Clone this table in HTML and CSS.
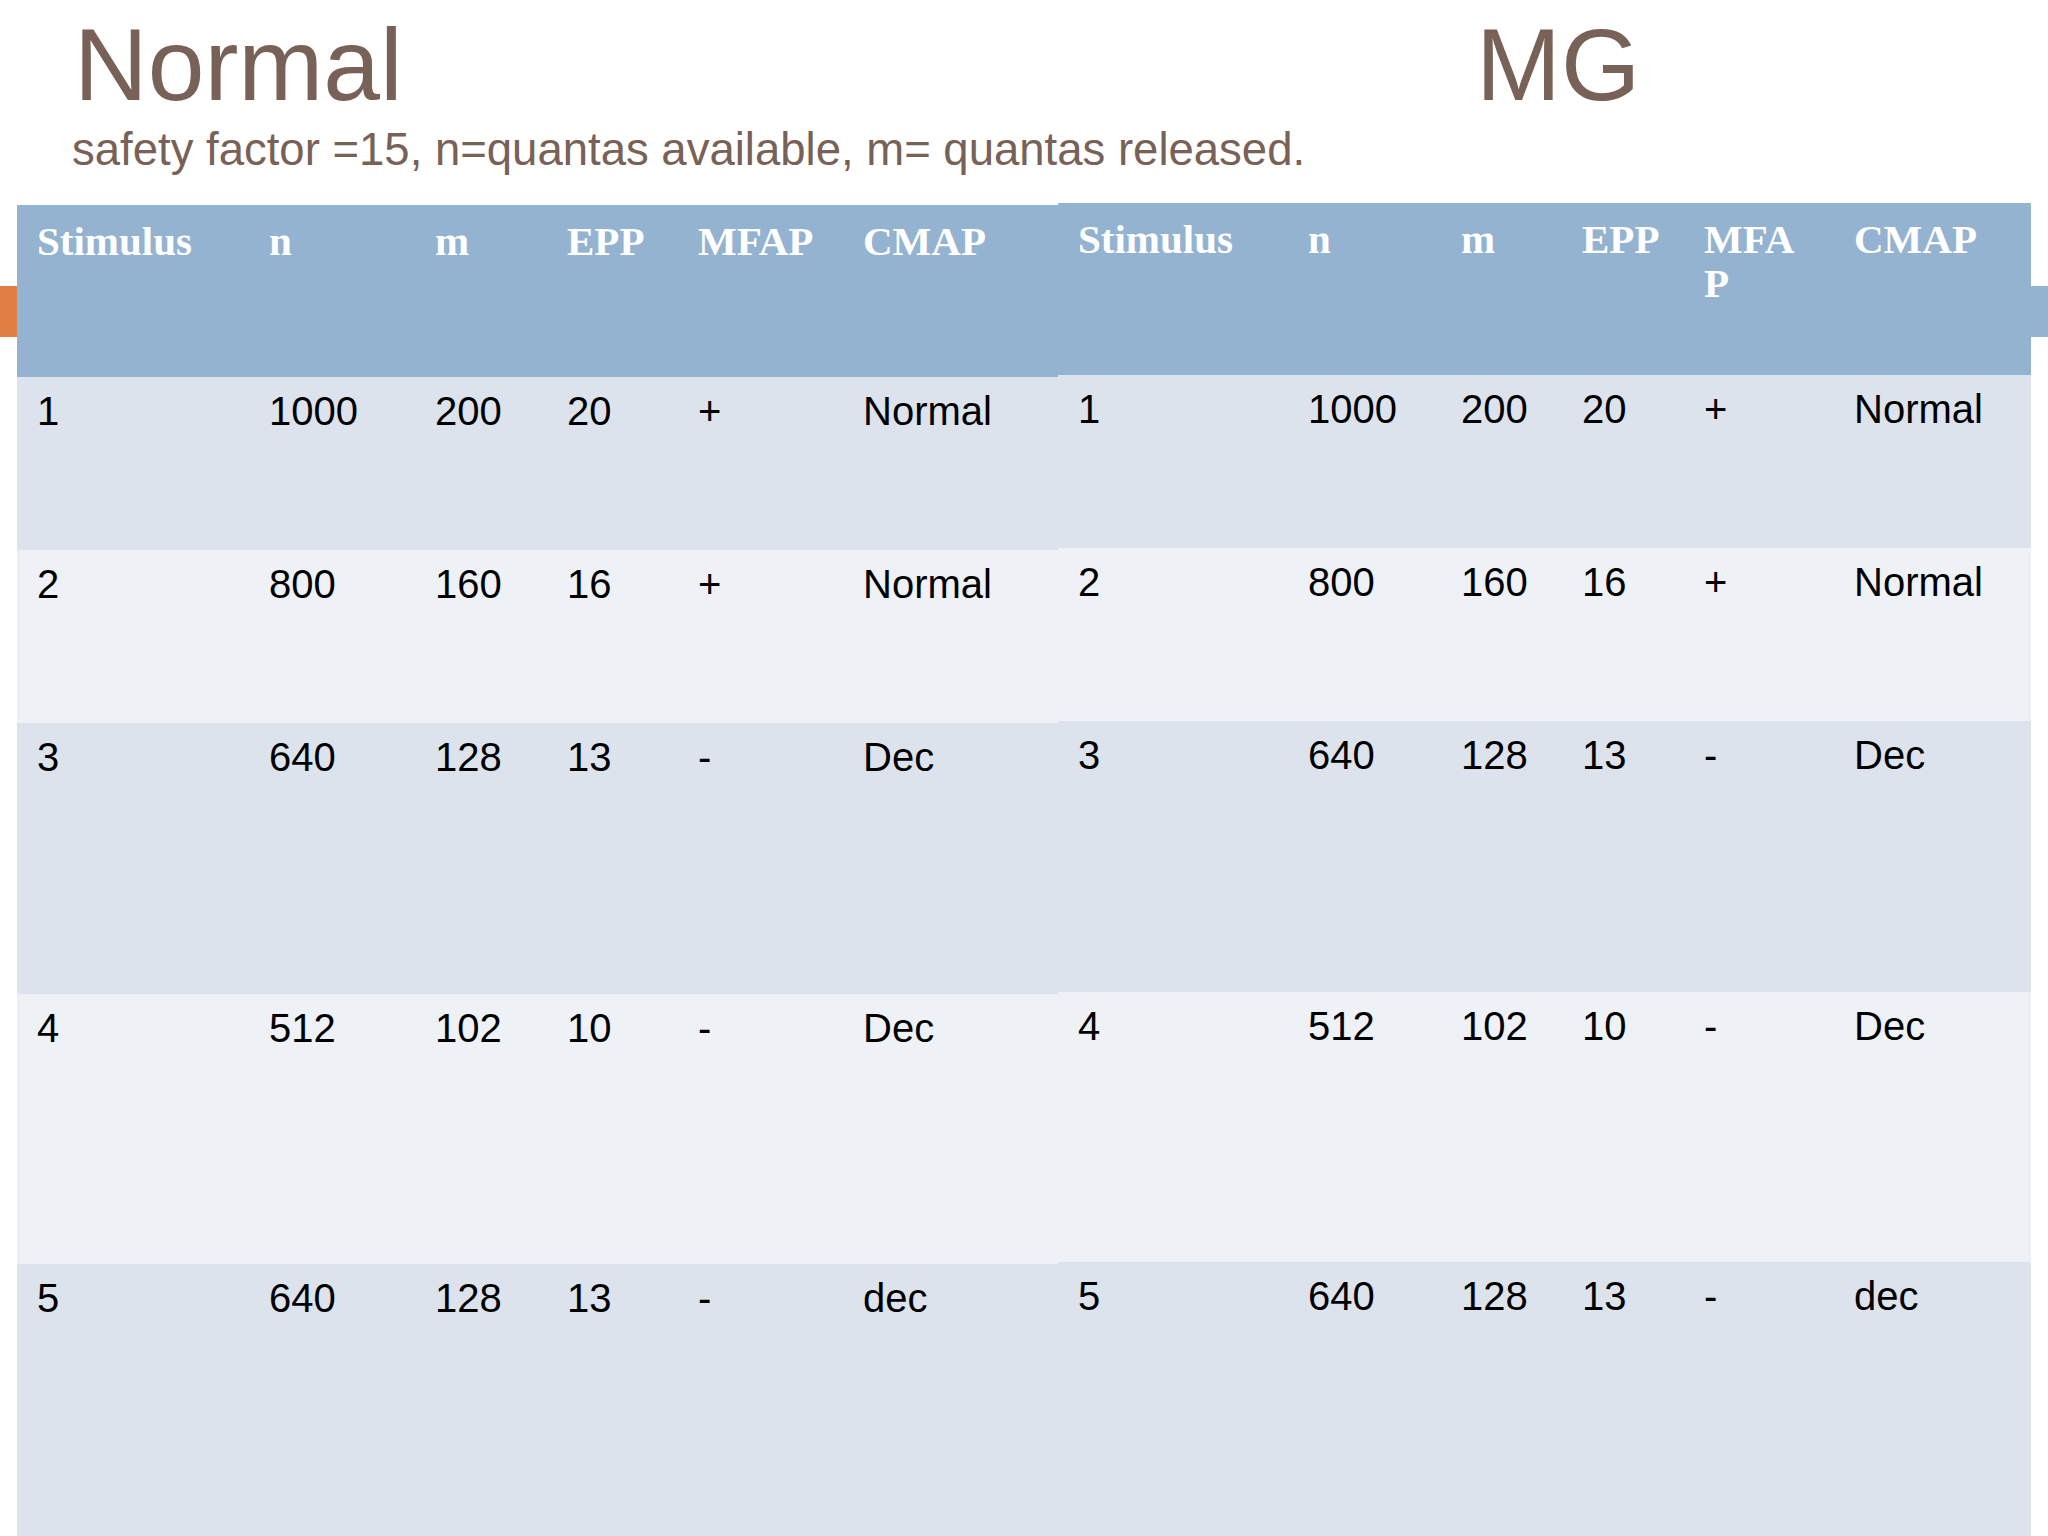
FILE: index.html
```html
<!DOCTYPE html>
<html lang="en">
<head>
<meta charset="utf-8">
<title>Normal vs MG</title>
<link rel="stylesheet" href="styles.css">
</head>
<body>
<div class="slide">
  <div class="bar bar-left"></div>
  <div class="bar bar-right"></div>
  <div class="titles">
    <h1 class="title title-normal">Normal</h1>
    <h1 class="title title-mg">MG</h1>
  </div>
  <p class="subtitle">safety factor =15, n=quantas available, m= quantas released.</p>
  <div class="tables">
    <table class="grid grid-left">
      <colgroup>
        <col class="l1"><col class="l2"><col class="l3"><col class="l4"><col class="l5"><col class="l6">
      </colgroup>
      <thead>
        <tr class="head"><th>Stimulus</th><th>n</th><th>m</th><th>EPP</th><th>MFAP</th><th>CMAP</th></tr>
      </thead>
      <tbody>
        <tr class="r1 odd"><td>1</td><td>1000</td><td>200</td><td>20</td><td>+</td><td>Normal</td></tr>
        <tr class="r2 even"><td>2</td><td>800</td><td>160</td><td>16</td><td>+</td><td>Normal</td></tr>
        <tr class="r3 odd"><td>3</td><td>640</td><td>128</td><td>13</td><td>-</td><td>Dec</td></tr>
        <tr class="r4 even"><td>4</td><td>512</td><td>102</td><td>10</td><td>-</td><td>Dec</td></tr>
        <tr class="r5 odd"><td>5</td><td>640</td><td>128</td><td>13</td><td>-</td><td>dec</td></tr>
      </tbody>
    </table>
    <table class="grid grid-right">
      <colgroup>
        <col class="g1"><col class="g2"><col class="g3"><col class="g4"><col class="g5"><col class="g6">
      </colgroup>
      <thead>
        <tr class="head"><th>Stimulus</th><th>n</th><th>m</th><th>EPP</th><th>MFA<br>P</th><th>CMAP</th></tr>
      </thead>
      <tbody>
        <tr class="r1 odd"><td>1</td><td>1000</td><td>200</td><td>20</td><td>+</td><td>Normal</td></tr>
        <tr class="r2 even"><td>2</td><td>800</td><td>160</td><td>16</td><td>+</td><td>Normal</td></tr>
        <tr class="r3 odd"><td>3</td><td>640</td><td>128</td><td>13</td><td>-</td><td>Dec</td></tr>
        <tr class="r4 even"><td>4</td><td>512</td><td>102</td><td>10</td><td>-</td><td>Dec</td></tr>
        <tr class="r5 odd"><td>5</td><td>640</td><td>128</td><td>13</td><td>-</td><td>dec</td></tr>
      </tbody>
    </table>
  </div>
</div>
</body>
</html>
```
FILE: styles.css
```css
html, body {
  margin: 0;
  padding: 0;
  background: #ffffff;
}

.slide {
  position: relative;
  width: 2048px;
  height: 1536px;
  overflow: hidden;
  background: #ffffff;
  font-family: "Liberation Sans", Arial, sans-serif;
}

.bar {
  position: absolute;
  top: 286px;
  height: 51px;
  width: 17px;
}
.bar-left {
  left: 0;
  background: #e07e44;
}
.bar-right {
  right: 0;
  background: #94b3d0;
}

.titles {
  display: flex;
  padding-top: 14px;
  padding-left: 74px;
}

.title {
  margin: 0;
  font-family: "Liberation Sans", Arial, sans-serif;
  font-weight: normal;
  font-size: 102px;
  line-height: 102px;
  color: #786156;
}

.title-normal {
  width: 1402px;
}

.subtitle {
  margin: 11px 0 0 72px;
  font-size: 45.5px;
  line-height: 45px;
  color: #786156;
}

.tables {
  display: flex;
  align-items: flex-start;
  margin-top: 33px;
  padding-left: 17px;
}

.grid {
  table-layout: fixed;
  border-collapse: collapse;
  border-spacing: 0;
}

.grid-left { width: 1041px; }
.grid-right { width: 973px; margin-top: -2px; }

.l1 { width: 232px; }
.l2 { width: 166px; }
.l3 { width: 132px; }
.l4 { width: 131px; }
.l5 { width: 165px; }
.l6 { width: 215px; }

.g1 { width: 230px; }
.g2 { width: 153px; }
.g3 { width: 121px; }
.g4 { width: 122px; }
.g5 { width: 150px; }
.g6 { width: 197px; }

.grid th,
.grid td {
  vertical-align: top;
  text-align: left;
  padding: 0 8px 0 20px;
  white-space: nowrap;
  overflow: hidden;
}

.head {
  height: 172px;
  background: #94b3d0;
}

.head th {
  padding-top: 14px;
  font-family: "Liberation Serif", "Times New Roman", serif;
  font-weight: bold;
  font-size: 41px;
  line-height: 44px;
  color: #ffffff;
  letter-spacing: 0;
}

.grid td {
  padding-top: 10px;
  font-family: "Liberation Sans", Arial, sans-serif;
  font-size: 40px;
  line-height: 48px;
  color: #000000;
}

.odd { background: #dce3ed; }
.even { background: #eef2f7; }

.r1 { height: 173px; }
.r2 { height: 173px; }
.r3 { height: 271px; }
.r4 { height: 270px; }
.r5 { height: 280px; }
```
